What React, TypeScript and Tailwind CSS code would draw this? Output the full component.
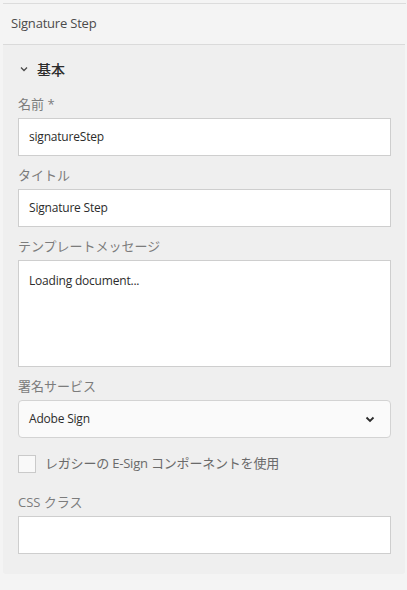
import React from "react";

const font = { fontFamily: '"Open Sans", "Noto Sans CJK JP", sans-serif' };

function Label({ children }: { children: React.ReactNode }) {
  return (
    <div className="mt-[9px] h-5 text-[13px] leading-5 text-[#7c7c7c]">{children}</div>
  );
}

export default function App() {
  return (
    <div className="min-h-[590px] w-[407px] bg-[#f4f4f4] pt-[3px]" style={font}>
      <div className="ml-[3px] w-[403px] border-t border-[#dcdcdc]">
        <div className="flex h-10 items-center pl-2 text-[13px] tracking-[-0.2px] text-[#4b4b4b]">Signature Step</div>
      </div>
      <div className="ml-[3px] w-[402px] rounded-b-[3px] border-t border-[#dadada] bg-[#efefef] px-[15px] pb-[20px] pr-[14px]">
        <div className="mt-[14px] flex h-5 items-center gap-[9px] pl-[2px] text-[14px] font-medium text-[#2c2c2c]">
          <svg width="8" height="6" viewBox="0 0 8 6" fill="none">
            <path d="M1 1.5 L4 4.5 L7 1.5" stroke="#4b4b4b" strokeWidth="1.3" />
          </svg>
          <span>基本</span>
        </div>
        <div className="h-[6px]" />
        <Label>名前 *</Label>
        <div className="mt-1 flex h-[38px] items-center border border-[#cecece] bg-white px-[10px] text-[12px] tracking-[-0.2px] text-[#2c2c2c]">
          signatureStep
        </div>
        <Label>タイトル</Label>
        <div className="mt-1 flex h-[38px] items-center border border-[#cecece] bg-white px-[10px] text-[12px] tracking-[-0.2px] text-[#2c2c2c]">
          Signature Step
        </div>
        <Label>テンプレートメッセージ</Label>
        <div className="mt-1 h-[107px] border border-[#cecece] bg-white px-[10px] pt-[11px] text-[12px] leading-[18px] tracking-[-0.2px] text-[#2c2c2c]">
          Loading document...
        </div>
        <Label>署名サービス</Label>
        <div className="mt-1 flex h-[38px] items-center justify-between rounded-[4px] border border-[#d3d3d3] bg-[#fafafa] pl-[10px] pr-[15px] text-[12px] tracking-[-0.2px] text-[#2c2c2c]">
          <span>Adobe Sign</span>
          <svg width="10" height="7" viewBox="0 0 10 7" fill="none">
            <path d="M1.5 1.5 L5 5 L8.5 1.5" stroke="#2c2c2c" strokeWidth="1.8" />
          </svg>
        </div>
        <div className="mt-4 flex items-center gap-[9px]">
          <div className="h-[18px] w-[18px] border border-[#cacaca] bg-[#f9f9f9]" />
          <span className="text-[13px] tracking-[-0.2px] text-[#6a6a6a]">レガシーの E-Sign コンポーネントを使用</span>
        </div>
        <div className="mt-[18px]" />
        <Label>CSS クラス</Label>
        <div className="mt-1 h-[38px] border border-[#cecece] bg-white" />
      </div>
    </div>
  );
}
